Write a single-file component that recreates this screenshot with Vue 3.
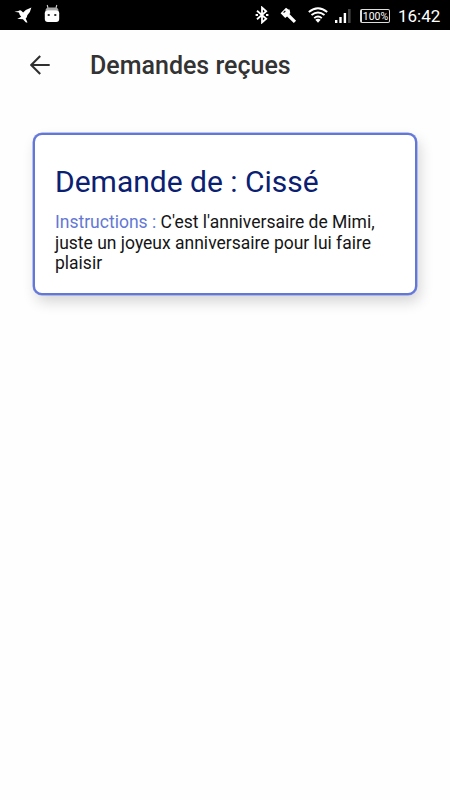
<template>
  <div class="screen">
    <header class="status-bar">
      <div class="status-left">
        <svg class="icon-bird" viewBox="0 0 20 18" fill="#fff">
          <path d="M0.5 5.6 L4.6 4.8 Q6.5 3.4 8 4.8 L9.6 6.3 Q12.5 3.2 18.3 1.2 Q17.4 6.2 14 9.2 Q13.8 11.5 12.3 12.8 L14.2 16.8 L12.6 16.8 L9.4 13.4 Q6.8 13 3.4 13.3 Q6 11.6 7.6 10.8 Q5.6 8.8 5.2 6.4 Z" />
        </svg>
        <svg class="icon-droid" viewBox="0 0 16 19">
          <path d="M3.2 1 L4 4 M12.8 1 L12 4" stroke="#ccc" stroke-width="1.1" />
          <path d="M1.4 6.8 Q1.8 3.6 5 3.6 H11 Q14.2 3.6 14.6 6.8 Z" fill="#aaa" />
          <rect x="0.8" y="6.2" width="14.4" height="11.8" rx="3" fill="#fff" />
          <rect x="3.7" y="10" width="2" height="2" fill="#333" />
          <rect x="10.3" y="10" width="2" height="2" fill="#333" />
        </svg>
      </div>
      <div class="status-right">
        <svg class="icon-bluetooth" viewBox="0 0 14 18" fill="none" stroke="#fff">
          <path d="M2 4.8 L11.2 12.8 L7 16.5 V1.5 L11.2 5.2 L2 13.2" stroke-width="1.8" />
          <path d="M0.6 9 H3 M11 9 H13.4" stroke-width="2" />
        </svg>
        <svg class="icon-tool" viewBox="0 0 17 17">
          <path d="M0.6 6.2 L6 0.8 L8.4 2.6 L9.6 2.4 L10.3 6.2 L9.4 7.1 L16.1 13.8 L13.8 16.1 L7.1 9.4 L5.2 11 Z" fill="#fff" />
          <path d="M3.6 5.6 L5.4 3.8" stroke="#000" stroke-width="1.1" />
        </svg>
        <svg class="icon-wifi" viewBox="0 0 20 16" fill="none" stroke="#fff" stroke-width="1.9">
          <path d="M0.8 5 Q10 -2.6 19.2 5" />
          <path d="M3.5 8.1 Q10 2.7 16.5 8.1" />
          <path d="M6.2 11.1 Q10 7.8 13.8 11.1" />
          <path d="M7.3 12.7 Q10 10.8 12.7 12.7 L10 15.7 Z" fill="#fff" stroke="none" />
        </svg>
        <svg class="icon-signal" viewBox="0 0 16 14" fill="#fff">
          <rect x="0" y="11" width="2.4" height="3" />
          <rect x="4.3" y="8" width="2.4" height="6" />
          <rect x="8.7" y="4" width="2.4" height="10" />
          <rect x="13" y="0" width="2.6" height="14" fill="#444" />
        </svg>
        <span class="battery">100%</span>
        <span class="clock">16:42</span>
      </div>
    </header>

    <nav class="app-bar">
      <svg class="back" viewBox="0 0 20 20" fill="none" stroke="#303030" stroke-width="2.1">
        <path d="M19.7 10 H1.6 M10.2 0.9 L1.2 10 L10.2 19.1" />
      </svg>
      <h1 class="title">Demandes reçues</h1>
    </nav>

    <main class="content">
      <article v-for="request in requests" :key="request.name" class="card">
        <h2 class="card-title">Demande de : {{ request.name }}</h2>
        <p class="card-text">
          <span class="card-label">Instructions :</span> {{ request.instructions }}
        </p>
      </article>
    </main>
  </div>
</template>

<script setup>
const requests = [
  {
    name: 'Cissé',
    instructions: "C'est l'anniversaire de Mimi, juste un joyeux anniversaire pour lui faire plaisir"
  }
];
</script>

<style>
body {
  background: #fefefe;
}
</style>

<style scoped>
.screen {
  min-height: 100vh;
  background: #fefefe;
  font-family: Roboto, "Liberation Sans", sans-serif;
}

.status-bar {
  display: flex;
  justify-content: space-between;
  height: 30px;
  box-sizing: border-box;
  padding: 0 10px 0 14px;
  background: #000;
  color: #fff;
}

.status-left,
.status-right {
  display: flex;
  align-items: center;
}

.icon-bird {
  width: 19px;
  height: 18px;
}

.icon-droid {
  width: 16px;
  height: 19px;
  margin: 0 0 3px 11px;
}

.icon-bluetooth {
  width: 14px;
  height: 18px;
}

.icon-tool {
  width: 17px;
  height: 17px;
  margin-left: 11px;
}

.icon-wifi {
  width: 20px;
  height: 16px;
  margin-left: 11px;
}

.icon-signal {
  width: 16px;
  height: 14px;
  margin: 2px 0 0 7px;
}

.battery {
  width: 30px;
  height: 14px;
  margin: 1px 0 0 9px;
  box-sizing: border-box;
  border: 1px solid #ddd;
  border-left-width: 2px;
  border-radius: 2px;
  font-size: 10.5px;
  line-height: 13px;
  text-align: center;
}

.clock {
  width: 42px;
  margin: 1px 0 0 8px;
  font-size: 17px;
  line-height: 20px;
  text-align: right;
  white-space: nowrap;
}

.app-bar {
  display: flex;
  align-items: center;
  height: 70px;
  padding-left: 30px;
}

.back {
  width: 20px;
  height: 20px;
}

.title {
  margin: 2px 0 0 40px;
  color: #333;
  font-size: 25px;
  font-weight: 500;
  line-height: 30px;
  white-space: nowrap;
}

.content {
  padding: 33px 33px 0;
}

.card {
  height: 162px;
  box-sizing: border-box;
  padding: 28px 20px 0;
  border: 2px solid #6377d8;
  border-radius: 9px;
  background: #fff;
  box-shadow: 0 0 0 0.5px #7c8de0, 3px 7px 14px rgba(0, 0, 0, 0.16);
}

.card-title {
  margin: 0;
  color: #0a2072;
  font-size: 30px;
  font-weight: 400;
  line-height: 38px;
  white-space: nowrap;
}

.card-text {
  margin: 11px 0 0;
  color: #151515;
  font-size: 17.5px;
  line-height: 20.6px;
}

.card-label {
  color: #6478d4;
}
</style>
